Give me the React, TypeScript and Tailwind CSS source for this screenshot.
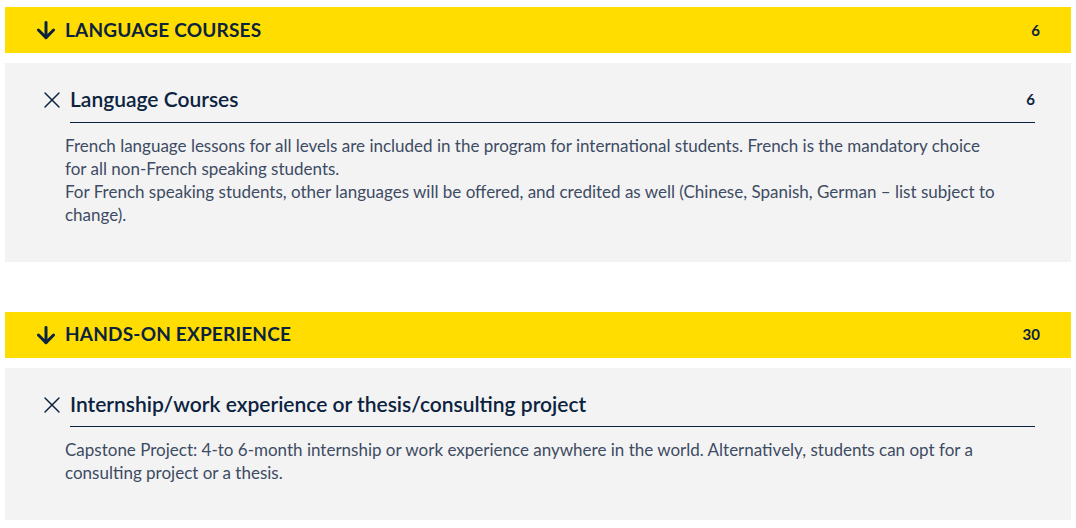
import { ArrowDown, X } from "lucide-react";

interface Course {
  title: string;
  credits: number;
  body: string[];
}

interface Section {
  heading: string;
  credits: number;
  courses: Course[];
}

const sections: Section[] = [
  {
    heading: "LANGUAGE COURSES",
    credits: 6,
    courses: [
      {
        title: "Language Courses",
        credits: 6,
        body: [
          "French language lessons for all levels are included in the program for international students. French is the mandatory choice for all non-French speaking students.",
          "For French speaking students, other languages will be offered, and credited as well (Chinese, Spanish, German – list subject to change).",
        ],
      },
    ],
  },
  {
    heading: "HANDS-ON EXPERIENCE",
    credits: 30,
    courses: [
      {
        title: "Internship/work experience or thesis/consulting project",
        credits: 0,
        body: [
          "Capstone Project: 4-to 6-month internship or work experience anywhere in the world. Alternatively, students can opt for a consulting project or a thesis.",
        ],
      },
    ],
  },
];

function SectionBlock({ section }: { section: Section }) {
  return (
    <div className="flex flex-col gap-[10px]">
      {/* yellow header bar */}
      <div className="flex h-[46px] items-center justify-between bg-[#ffdd00] pl-[28px] pr-[31px] text-[#0c2340]">
        <div className="flex items-center gap-[6px]">
          <ArrowDown size={26} strokeWidth={2.75} />
          <span className="text-[19px] font-bold tracking-[0.2px]">{section.heading}</span>
        </div>
        <span className="text-[15px] font-bold">{section.credits}</span>
      </div>

      {/* course list */}
      <div className="bg-[#f3f3f3] pb-[36px] pt-[20px]">
        {section.courses.map((course) => (
          <div key={course.title}>
            <div className="flex items-start pl-[33px] pr-[36px]">
              <X size={28} strokeWidth={1.25} className="mt-[3px] shrink-0 text-[#0c2340]" />
              <div className="ml-[4px] flex flex-1 items-center justify-between border-b-[1.5px] border-[#0c2340] pb-[7px] text-[#0c2340]">
                <span className="text-[21px] font-semibold">{course.title}</span>
                {course.credits > 0 && (
                  <span className="text-[15px] font-bold">{course.credits}</span>
                )}
              </div>
            </div>
            <div className="mt-[11px] w-[996px] pl-[60px] text-[17px] leading-[23px] text-[#3d4b63]">
              {course.body.map((p, i) => (
                <p key={i}>{p}</p>
              ))}
            </div>
          </div>
        ))}
      </div>
    </div>
  );
}

export default function App() {
  return (
    <div
      className="flex min-h-[528px] flex-col gap-[50px] bg-white px-[5px] pt-[7px]"
      style={{ fontFamily: "Lato, 'Noto Sans', sans-serif" }}
    >
      {sections.map((s) => (
        <SectionBlock key={s.heading} section={s} />
      ))}
    </div>
  );
}
